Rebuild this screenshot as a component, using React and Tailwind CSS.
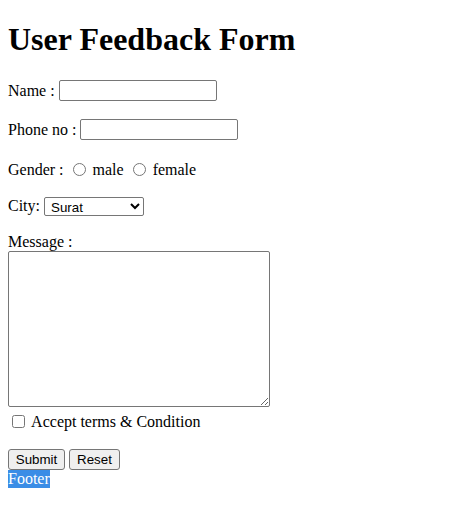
import React from "react";

const field =
  "border border-[#767676] rounded-[2px] bg-white px-[2px] py-[1px] font-['Liberation_Sans',Arial,sans-serif] text-[13.33px]";
const btn =
  "border border-[#767676] rounded-[3px] bg-[#efefef] px-[6px] h-[21px] font-['Liberation_Sans',Arial,sans-serif] text-[13.33px] text-black";

export default function App() {
  return (
    <div className="px-2 font-['Liberation_Serif','Times_New_Roman',serif] text-base text-black leading-[1.15]">
      <h1 className="text-[32px] font-bold leading-[37px] mt-[21.44px] mb-[21.44px]">
        User Feedback Form
      </h1>

      <form>
        {/* text fields */}
        <p className="my-4 h-[23px] leading-[21px]">
          Name : <input type="text" className={`${field} w-[158px] h-[21px] align-top`} />
        </p>
        <p className="my-4 h-[23px] leading-[21px]">
          Phone no : <input type="tel" className={`${field} w-[158px] h-[21px] align-top`} />
        </p>

        <p className="my-4 h-[23px] leading-[23px]">
          Gender :{" "}
          <input type="radio" name="gender" className="w-[13px] h-[13px] ml-[5px] mr-[3px] align-[-1px]" /> male{" "}
          <input type="radio" name="gender" className="w-[13px] h-[13px] ml-[5px] mr-[3px] align-[-1px]" /> female
        </p>

        <p className="my-4 h-[20px] leading-[18px]">
          City:{" "}
          <select className={`${field} w-[100px] h-[19px] px-0 py-0 align-top`} defaultValue="Surat">
            <option>Surat</option>
            <option>Ahmedabad</option>
            <option>Vadodara</option>
            <option>Rajkot</option>
          </select>
        </p>

        <label className="block">Message :</label>
        <textarea className={`${field} block w-[262px] h-[156px] resize mb-[6px]`}></textarea>
        <div>
          <input type="checkbox" className="w-[13px] h-[13px] ml-1 mr-[3px] align-[-1px]" /> Accept terms &amp; Condition
        </div>

        <p className="mt-[14px] h-[24.5px] flex items-end gap-1">
          <button type="submit" className={`${btn} w-[57px]`}>Submit</button>
          <button type="reset" className={`${btn} w-[51px]`}>Reset</button>
        </p>
      </form>

      <div className="bg-[#3b8de6] text-white inline-block leading-[18px] align-top">Footer</div>
    </div>
  );
}
